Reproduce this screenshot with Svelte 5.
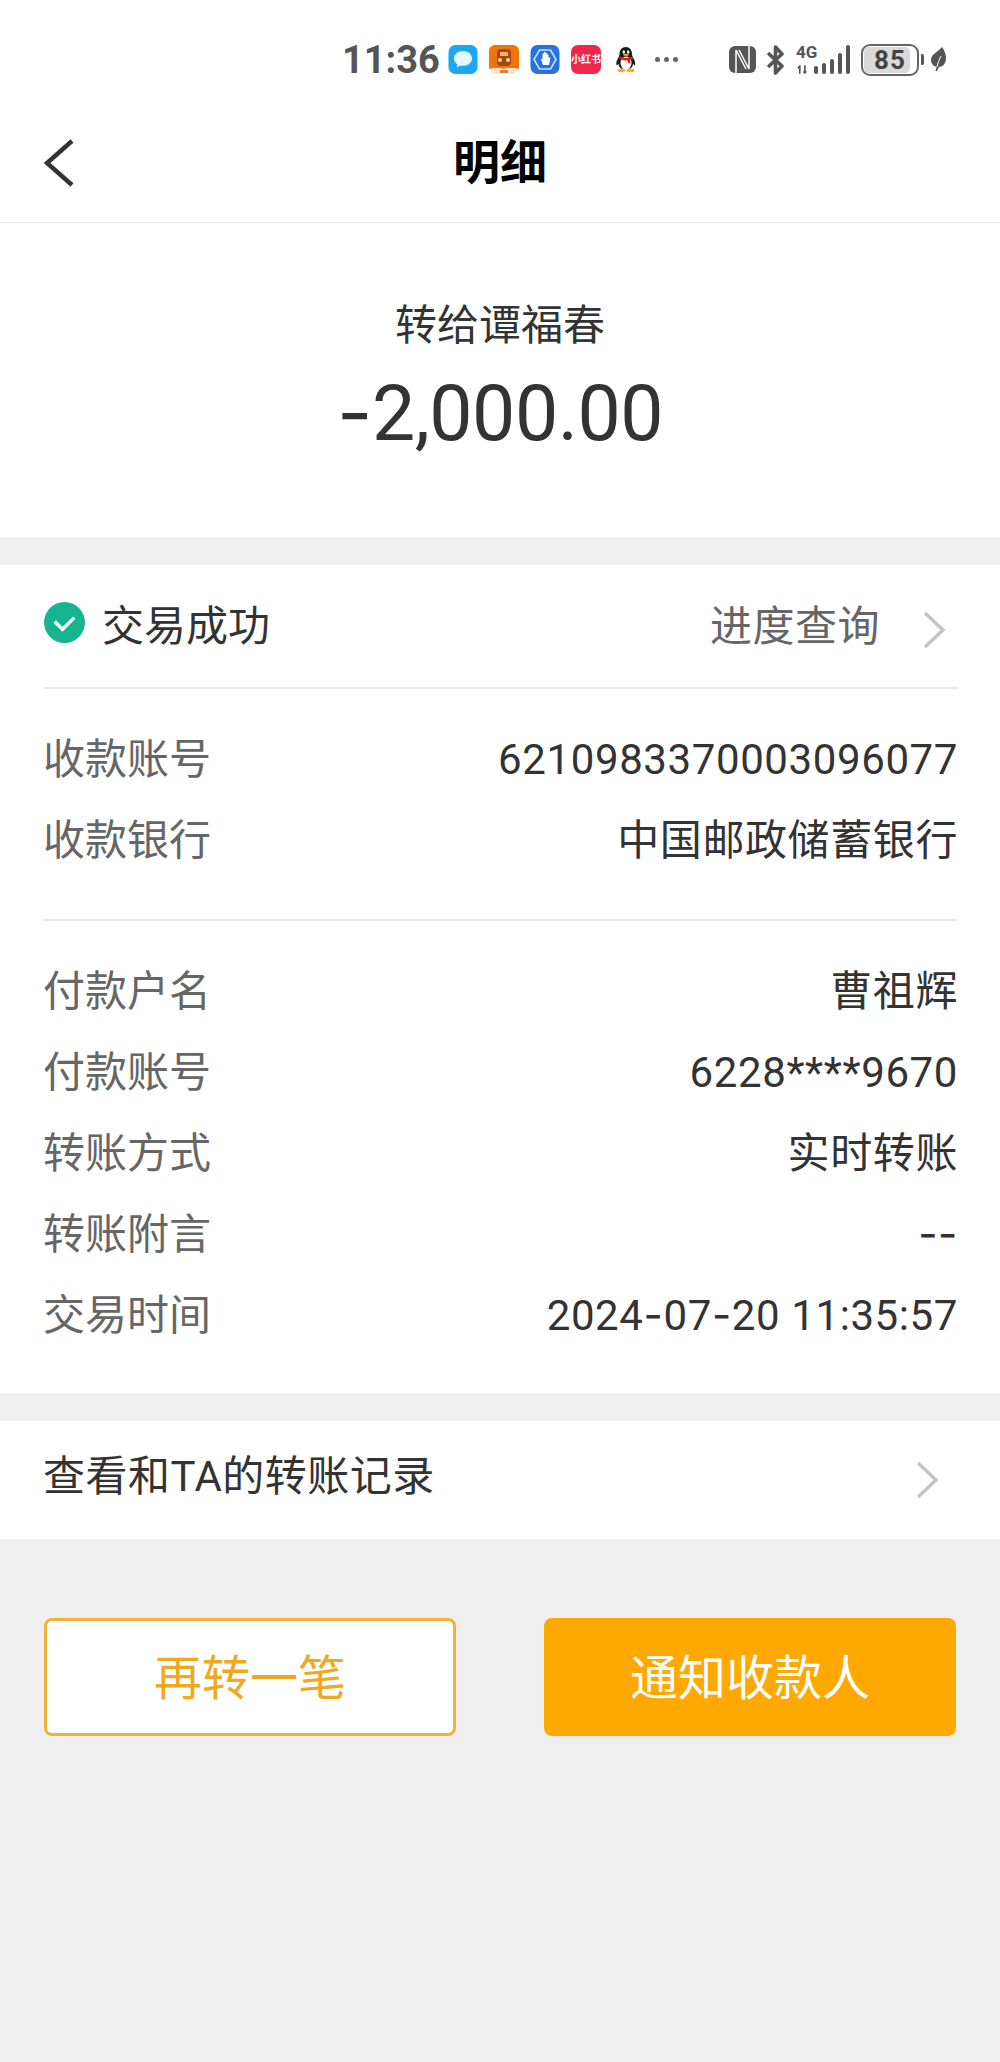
<script>
  const account = [
    { label: '收款账号', value: '6210983370003096077' },
    { label: '收款银行', value: '中国邮政储蓄银行' },
  ];
  const details = [
    { label: '付款户名', value: '曹祖辉' },
    { label: '付款账号', value: '6228****9670' },
    { label: '转账方式', value: '实时转账' },
    { label: '转账附言', value: '--' },
    { label: '交易时间', value: '2024-07-20 11:35:57' },
  ];
  const bars = [8, 11, 15, 21, 29];

  // hyphens are drawn wider in the reference, so they get their own font
  const parts = (text) => text.split(/(-)/).filter(Boolean);
</script>

{#snippet row(r)}
  <div class="row">
    <span class="label">{r.label}</span>
    <span class="value">
      {#each parts(r.value) as p}{#if p === '-'}<span class="dash">-</span>{:else}{p}{/if}{/each}
    </span>
  </div>
{/snippet}

<div class="page">
  <div class="status">
    <span class="time">11:36</span>
    <svg class="app first" viewBox="0 0 29 29">
      <rect width="29" height="29" rx="7" fill="#1aa7f5" />
      <path d="M14.500 6c-5 0-9 3.200-9 7.400 0 2.400 1.300 4.400 3.300 5.800l-.5 3.300 3.500-2c.9.2 1.800.3 2.700.3 5 0 9-3.200 9-7.400S19.500 6 14.500 6z" fill="#e8f6ff" />
    </svg>
    <svg class="app" viewBox="0 0 30 29">
      <path d="M6 0h18a6 6 0 0 1 6 6v18c-5-1.500-10-1.500-15 0-5-1.500-10-1.500-15 0V6a6 6 0 0 1 6-6z" fill="#f2720c" />
      <path d="M0 24c5-1.500 10-1.500 15 0 5-1.500 10-1.500 15 0l-5 5H5z" fill="#f9e3c8" />
      <rect x="8" y="4" width="14" height="17" rx="4" fill="#a5470f" />
      <rect x="11" y="7" width="8" height="4" fill="#f5b26b" />
      <circle cx="11" cy="15" r="2" fill="#fbd9a8" />
      <circle cx="19" cy="15" r="2" fill="#fbd9a8" />
      <rect x="11" y="25" width="8" height="3" fill="#c98a4a" />
    </svg>
    <svg class="app" viewBox="0 0 29 29">
      <rect width="29" height="29" rx="7" fill="#2672e2" />
      <path d="M9 5h11l5.500 9.500L20 24H9L3.500 14.500z" fill="none" stroke="#cfe2fb" stroke-width="1.600" />
      <path d="M10 13l2 2V8.500h1.500V7h1.500v1h1.500v1.500H18V13l2-1-1.500 8h-6z" fill="#fff" />
    </svg>
    <div class="app redbook"><span>小红书</span></div>
    <svg class="qq" viewBox="0 0 24 27">
      <path d="M12 1c-4 0-6.500 3-6.500 7 0 1-.2 2-.8 3-1.400 2.500-3 5.500-2.200 8 .5.800 1.500-.5 2-1.500 0 2 1 4 2.500 5h9.500c1.500-1 2.500-3 2.500-5 .5 1 1.500 2.300 2 1.500.8-2.500-.8-5.500-2.200-8-.6-1-.8-2-.8-3 0-4-2.500-7-6-7z" fill="#1a1a1a" />
      <ellipse cx="12" cy="17" rx="5.500" ry="6.500" fill="#fff" />
      <path d="M5.500 10.500c4 1.800 9 1.800 13 0l.5 2c-1 .8-2 1.300-3 1.600l.5 3.400-2.500-.8-.5-2.300c-2.500.3-5 0-8-1.900z" fill="#d8241c" />
      <ellipse cx="9.800" cy="6" rx="1.200" ry="1.700" fill="#fff" />
      <ellipse cx="14.200" cy="6" rx="1.200" ry="1.700" fill="#fff" />
      <ellipse cx="12" cy="8.800" rx="3" ry="1.100" fill="#f2b21c" />
      <ellipse cx="7.500" cy="24.500" rx="4" ry="1.800" fill="#f2b21c" />
      <ellipse cx="16.500" cy="24.500" rx="4" ry="1.800" fill="#f2b21c" />
    </svg>
    <div class="dots"><i></i><i></i><i></i></div>
    <svg class="nfc" viewBox="0 0 27 27">
      <rect width="27" height="27" rx="6" fill="#555" />
      <path d="M7 27V4l10 19M20 0v23L10 4" fill="none" stroke="#fff" stroke-width="1.500" />
    </svg>
    <svg class="bt" viewBox="0 0 19 30">
      <path d="M2 8l14 13-6.500 7V2L16 9 2 22" fill="none" stroke="#555" stroke-width="3.600" stroke-linejoin="round" />
    </svg>
    <div class="net">
      <span class="label4g">4G</span>
      <svg class="arrows" viewBox="0 0 14 9">
        <path d="M3 9V1L1 3M8.500 0v8l1.500-1.500M8.500 8L7 6.500" fill="none" stroke="#555" stroke-width="1.800" />
      </svg>
      <div class="bars">
        {#each bars as h}
          <i style="height: {h}px"></i>
        {/each}
      </div>
    </div>
    <div class="battery"><div class="fill"></div><span>85</span></div>
    <i class="nub"></i>
    <svg class="leaf" viewBox="0 0 15 25">
      <path d="M11 0c3 4 4 8 4 11 0 5-3 9-7 9l-2 4H4.500l1-4C2 19 0 16 0 13 0 7 7 5 11 0z" fill="#555" />
      <path d="M6 20c1-4 2-7 4-11" stroke="#fff" stroke-width="1" fill="none" />
    </svg>
  </div>

  <header class="nav">
    <svg class="back" viewBox="0 0 32 48">
      <path d="M29 2L4 24l25 22" fill="none" stroke="#333" stroke-width="4.400" />
    </svg>
    <h1>明细</h1>
  </header>

  <section class="summary">
    <div class="payee">转给谭福春</div>
    <div class="amount"><span class="dash">-</span>2,000.00</div>
  </section>

  <section class="card">
    <div class="state">
      <svg class="ok" viewBox="0 0 42 42">
        <circle cx="21" cy="21" r="21" fill="#17b492" />
        <path d="M11 20l8 8 12-12" fill="none" stroke="#fff" stroke-width="3.600" />
      </svg>
      <span class="state-text">交易成功</span>
      <span class="progress">进度查询</span>
      <svg class="chev state-chev" viewBox="0 0 24 38">
        <path d="M3 2l18 17L3 36" fill="none" stroke="#c4c4c4" stroke-width="3.400" />
      </svg>
    </div>
    <div class="rows first-rows">
      {#each account as r}
        {@render row(r)}
      {/each}
    </div>
    <div class="rule"></div>
    <div class="rows">
      {#each details as r}
        {@render row(r)}
      {/each}
    </div>
  </section>

  <section class="history">
    <span class="history-text">查看和TA的转账记录</span>
    <svg class="chev history-chev" viewBox="0 0 24 38">
      <path d="M3 2l18 17L3 36" fill="none" stroke="#c4c4c4" stroke-width="3.400" />
    </svg>
  </section>

  <div class="actions">
    <button class="btn outline"><span>再转一笔</span></button>
    <button class="btn solid"><span>通知收款人</span></button>
  </div>
</div>

<style>
  :global(body) {
    margin: 0;
    background: #efefef;
  }

  .page {
    height: 2062px;
    background: #efefef;
    font-family: Roboto, "Noto Sans CJK SC", sans-serif;
    color: #333;
    font-size: 42px;
    overflow: hidden;
  }

  .status {
    height: 100px;
    padding: 19px 0 0 344px;
    box-sizing: border-box;
    background: #fff;
    display: flex;
    align-items: center;
    color: #555;
  }

  .time {
    font-weight: 700;
    font-size: 38px;
    width: 95px;
    margin-left: -2px;
    line-height: 1;
    white-space: nowrap;
  }

  .app {
    width: 30px;
    height: 29px;
    margin-left: 11px;
    flex-shrink: 0;
  }

  .first {
    margin-left: 11px;
  }

  .redbook {
    background: #f0264c;
    border-radius: 7px;
    display: flex;
    align-items: center;
    justify-content: center;
    overflow: hidden;
  }

  .redbook span {
    color: #fff;
    font-size: 10px;
    font-weight: 700;
    white-space: nowrap;
    line-height: 1;
  }

  .qq {
    width: 24px;
    height: 27px;
    margin-left: 13px;
  }

  .dots {
    display: flex;
    gap: 4px;
    margin-left: 17px;
  }

  .dots i {
    width: 5px;
    height: 5px;
    border-radius: 50%;
    background: #666;
  }

  .nfc {
    width: 27px;
    height: 27px;
    margin-left: 51px;
  }

  .bt {
    width: 19px;
    height: 30px;
    margin-left: 10px;
  }

  .net {
    position: relative;
    width: 54px;
    height: 29px;
    margin-left: 11px;
  }

  .label4g {
    position: absolute;
    left: 0;
    top: -1px;
    font-size: 17px;
    font-weight: 700;
    line-height: 1;
    white-space: nowrap;
  }

  .arrows {
    position: absolute;
    left: 1px;
    bottom: 0;
    width: 13px;
    height: 9px;
  }

  .bars {
    position: absolute;
    right: 0;
    bottom: 0;
    display: flex;
    align-items: flex-end;
    gap: 3.500px;
  }

  .bars i {
    width: 4.500px;
    background: #555;
    border-radius: 2px;
  }

  .battery {
    position: relative;
    width: 58px;
    height: 32px;
    margin-left: 11px;
    box-sizing: border-box;
    border: 2.500px solid #666;
    border-radius: 9px;
    display: flex;
    align-items: center;
    justify-content: center;
    overflow: hidden;
  }

  .fill {
    position: absolute;
    left: 1px;
    top: 1px;
    bottom: 1px;
    width: 46px;
    background: #d9d9d9;
    border-radius: 5px;
  }

  .battery span {
    position: relative;
    font-weight: 700;
    font-size: 26px;
    line-height: 1;
    letter-spacing: 1px;
    color: #444;
  }

  .nub {
    width: 3px;
    height: 11px;
    margin-left: 2px;
    background: #555;
    border-radius: 0 2px 2px 0;
  }

  .leaf {
    width: 15px;
    height: 25px;
    margin-left: 7px;
  }

  .nav {
    height: 123px;
    box-sizing: border-box;
    background: #fff;
    border-bottom: 1px solid #e8e8e8;
    display: flex;
    align-items: center;
    justify-content: center;
    position: relative;
  }

  .back {
    position: absolute;
    left: 43px;
    top: 39px;
    width: 32px;
    height: 48px;
  }

  h1 {
    margin: 3px 0 0;
    font-size: 47px;
    font-weight: 700;
    color: #000;
    line-height: 1;
  }

  .summary {
    height: 314px;
    box-sizing: border-box;
    background: #fff;
    padding-top: 71px;
    text-align: center;
  }

  .payee {
    font-size: 42px;
    line-height: 64px;
  }

  .amount {
    font-size: 77px;
    letter-spacing: -0.5px;
    line-height: 90px;
    margin-top: 9px;
  }

  .dash {
    font-family: Inter, sans-serif;
  }

  .card {
    margin-top: 28px;
    background: #fff;
    height: 828px;
    box-sizing: border-box;
  }

  .state {
    height: 124px;
    margin: 0 42px 0 44px;
    padding-bottom: 7px;
    display: flex;
    align-items: center;
    border-bottom: 2px solid #e9e9e9;
    box-sizing: border-box;
  }

  .ok {
    width: 41px;
    height: 41px;
  }

  .state-text {
    margin-left: 17px;
  }

  .progress {
    margin-left: auto;
    color: #666;
    letter-spacing: 0.5px;
  }

  .chev {
    width: 24px;
    height: 38px;
    flex-shrink: 0;
  }

  .state-chev {
    margin: 14px 12px 0 42px;
  }

  .rows {
    padding: 0 44px;
  }

  .first-rows {
    padding-top: 30px;
  }

  .row {
    height: 81px;
    box-sizing: border-box;
    display: flex;
    justify-content: space-between;
    align-items: center;
    line-height: 1;
  }

  .label {
    color: #666;
    margin-left: -1px;
  }

  .value {
    color: #333;
    white-space: nowrap;
    letter-spacing: 0.6px;
    margin-right: -2px;
  }

  .rule {
    margin: 38px 44px 30px;
    height: 2px;
    background: #e6e6e6;
  }

  .history {
    margin-top: 28px;
    height: 118px;
    background: #fff;
    padding: 0 44px;
    display: flex;
    align-items: center;
    justify-content: space-between;
  }

  .history-text {
    margin: 0 0 15px -1px;
    letter-spacing: 0.5px;
  }

  .history-chev {
    margin-right: 17px;
  }

  .actions {
    margin-top: 79px;
    padding: 0 44px;
    display: flex;
    justify-content: space-between;
  }

  .btn {
    width: 412px;
    height: 118px;
    box-sizing: border-box;
    border-radius: 8px;
    font-family: inherit;
    font-size: 48px;
    padding: 0 0 7px;
  }

  .outline {
    background: #fff;
    border: 3px solid #f2b233;
    color: #f0a81f;
  }

  .solid {
    background: #ffa900;
    border: none;
    color: #fff;
  }
</style>
